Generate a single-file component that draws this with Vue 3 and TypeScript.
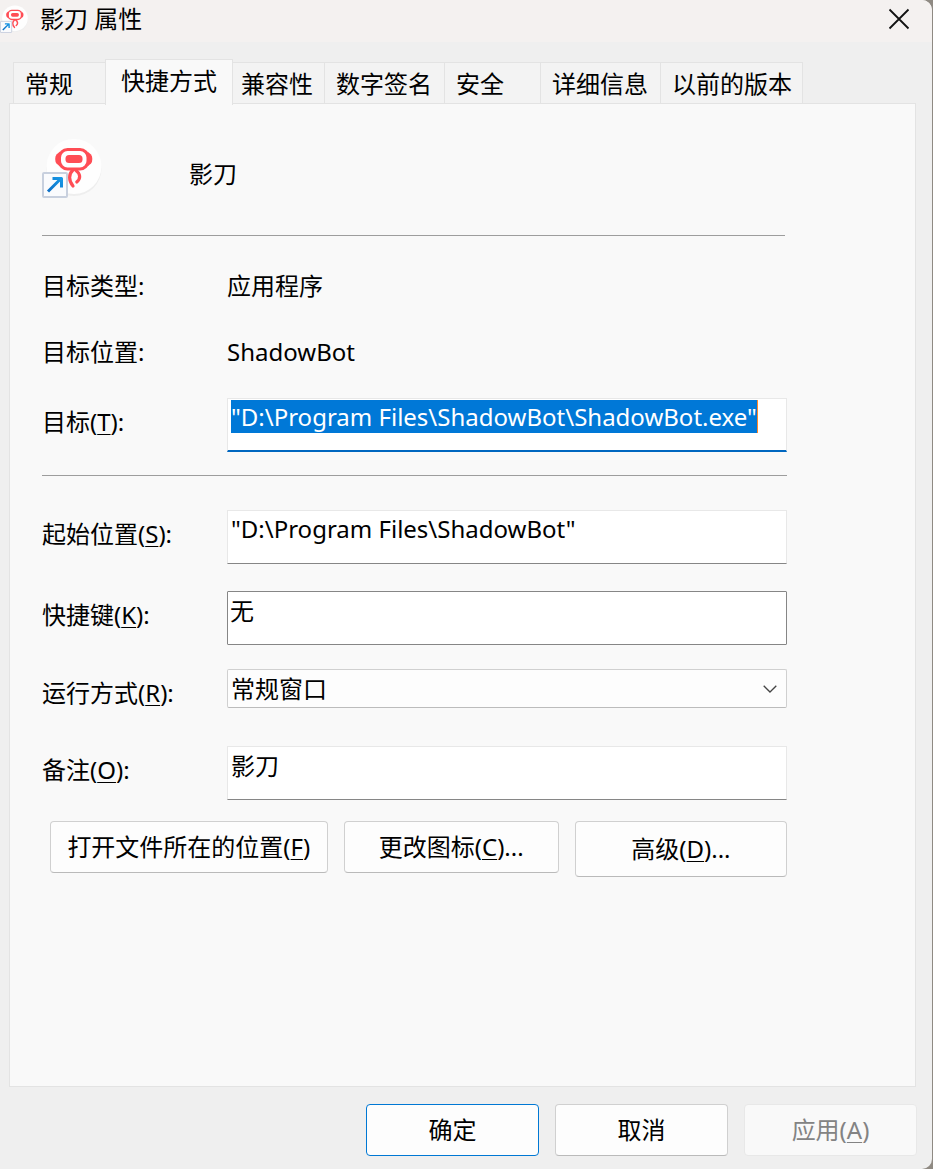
<script setup lang="ts">
import { onMounted, ref } from 'vue'

interface Tab {
  id: string
  label: string
  size: string
}

const tabs: Tab[] = [
  { id: 'general', label: '常规', size: 'w-93' },
  { id: 'shortcut', label: '快捷方式', size: 'w-128' },
  { id: 'compat', label: '兼容性', size: 'w-93' },
  { id: 'sign', label: '数字签名', size: 'w-121' },
  { id: 'security', label: '安全', size: 'w-97' },
  { id: 'details', label: '详细信息', size: 'w-121' },
  { id: 'previous', label: '以前的版本', size: 'w-143' },
]

const activeTab = ref('shortcut')
const target = ref('"D:\\Program Files\\ShadowBot\\ShadowBot.exe"')
const startIn = ref('"D:\\Program Files\\ShadowBot"')
const hotkey = ref('无')
const runMode = ref('常规窗口')
const comment = ref('影刀')
const targetInput = ref<HTMLInputElement | null>(null)

onMounted(() => {
  targetInput.value?.focus()
  targetInput.value?.select()
})
</script>

<template>
  <div class="window">
    <svg class="defs" aria-hidden="true">
      <defs>
        <linearGradient id="arrow-fill" x1="0" y1="1" x2="1" y2="0">
          <stop offset="0" stop-color="#0f6fc4" />
          <stop offset="1" stop-color="#1597e6" />
        </linearGradient>
        <symbol id="app-icon" viewBox="0 0 60 60">
          <circle cx="32" cy="30.500" r="27.500" fill="#eeeeee" />
          <circle cx="32" cy="28.500" r="27.500" fill="#fefefe" />
          <path d="M18 13.500 L14.500 16.500 Q13.200 18 13.200 21 Q13.200 24 14.500 25.500 L18 28.500 Z" fill="#ff4d55" />
          <path d="M45.500 13.500 L49 16.500 Q50.300 18 50.300 21 Q50.300 24 49 25.500 L45.500 28.500 Z" fill="#ff4d55" />
          <rect x="17.500" y="11.500" width="28.500" height="19.500" rx="8" fill="#fff" stroke="#ff4d55" stroke-width="3" />
          <rect x="23.500" y="17" width="17" height="8" rx="3.500" fill="#ff4d55" />
          <path d="M31 32 C26.500 36 26.500 42.500 31 48" fill="none" stroke="#ff4d55" stroke-width="3.200" stroke-linecap="round" />
          <path d="M33.500 32 C38.800 36 38.800 40.500 34.800 44" fill="none" stroke="#ff4d55" stroke-width="3.200" stroke-linecap="round" />
          <rect x="1" y="35" width="24" height="24" rx="1" fill="#fafbfd" stroke="#c8d0de" stroke-width="2" />
          <path d="M6 53.500 L19 40.500 M10.500 40.500 H19.500 V49.500" fill="none" stroke="url(#arrow-fill)" stroke-width="3" stroke-linejoin="round" />
        </symbol>
      </defs>
    </svg>

    <header class="titlebar">
      <svg class="title-icon" aria-hidden="true"><use href="#app-icon" /></svg>
      <h1 class="title">影刀 属性</h1>
      <button class="close" type="button" aria-label="关闭">
        <svg width="22" height="22" viewBox="0 0 22 22" aria-hidden="true">
          <path d="M1.500 1.500 L20.500 20.500 M20.500 1.500 L1.500 20.500" stroke="#111" stroke-width="1.800" fill="none" />
        </svg>
      </button>
    </header>

    <nav class="tabs" role="tablist">
      <button
        v-for="tab in tabs"
        :key="tab.id"
        type="button"
        role="tab"
        class="tab"
        :class="[tab.size, { active: tab.id === activeTab }]"
        :aria-selected="tab.id === activeTab"
        @click="activeTab = tab.id"
      >{{ tab.label }}</button>
    </nav>

    <main class="panel">
      <div class="head">
        <svg class="head-icon" aria-hidden="true"><use href="#app-icon" /></svg>
        <span>影刀</span>
      </div>

      <hr class="rule">

      <dl class="facts">
        <dt>目标类型:</dt>
        <dd>应用程序</dd>
        <dt>目标位置:</dt>
        <dd>ShadowBot</dd>
      </dl>

      <div class="row">
        <label for="target">目标(<u>T</u>):</label>
        <div class="field">
          <input id="target" ref="targetInput" v-model="target" class="box focused" type="text" spellcheck="false">
          <span class="caret" />
        </div>
      </div>

      <hr class="rule lower">

      <div class="rows">
        <div class="row">
          <label for="start">起始位置(<u>S</u>):</label>
          <input id="start" v-model="startIn" class="box" type="text" spellcheck="false">
        </div>
        <div class="row">
          <label for="hotkey">快捷键(<u>K</u>):</label>
          <input id="hotkey" v-model="hotkey" class="box outlined" type="text">
        </div>
        <div class="row run">
          <label for="run">运行方式(<u>R</u>):</label>
          <div class="field">
            <select id="run" v-model="runMode" class="select">
              <option>常规窗口</option>
              <option>最小化</option>
              <option>最大化</option>
            </select>
            <svg class="chevron" viewBox="0 0 14 8" aria-hidden="true">
              <path d="M0.700 0.700 L7 7 L13.300 0.700" fill="none" stroke="#444" stroke-width="1.300" />
            </svg>
          </div>
        </div>
        <div class="row">
          <label for="comment">备注(<u>O</u>):</label>
          <input id="comment" v-model="comment" class="box" type="text">
        </div>
      </div>

      <div class="actions">
        <button class="btn open" type="button">打开文件所在的位置(<u>F</u>)</button>
        <button class="btn change" type="button">更改图标(<u>C</u>)...</button>
        <button class="btn advanced" type="button">高级(<u>D</u>)...</button>
      </div>
    </main>

    <footer class="footer">
      <button class="btn primary" type="button">确定</button>
      <button class="btn" type="button">取消</button>
      <button class="btn" type="button" disabled>应用(<u>A</u>)</button>
    </footer>
  </div>
</template>

<style>
body {
  background: #8f8a83;
}
</style>

<style scoped>
.window {
  box-sizing: border-box;
  display: flex;
  flex-direction: column;
  min-height: 100vh;
  margin-right: 1px;
  overflow: hidden;
  border-radius: 0 10px 10px 0;
  background: #efefef;
  color: #000;
  font: 24px/32px "Noto Sans", "Noto Sans CJK SC", sans-serif;
}
.window *,
.window *::before {
  box-sizing: border-box;
}
button,
input,
select {
  margin: 0;
  border-radius: 0;
  color: inherit;
  font: inherit;
}
button {
  padding: 0;
}
u {
  text-decoration-thickness: 1px;
  text-underline-offset: 3px;
}
.defs {
  position: absolute;
  width: 0;
  height: 0;
}

.titlebar {
  display: flex;
  align-items: center;
  height: 42px;
  padding: 0 20px 5px 0;
  background: #f4f1f0;
}
.title-icon {
  flex: none;
  width: 28px;
  height: 28px;
}
.title {
  flex: 1;
  margin: 0 0 0 12px;
  font-size: 24px;
  font-weight: 400;
}
.close {
  display: grid;
  place-items: center;
  width: 26px;
  height: 26px;
  border: 0;
  background: none;
}

.tabs {
  display: flex;
  align-items: flex-end;
  margin: 17px 16px 0 13px;
}
.tab {
  height: 42px;
  margin-right: -1px;
  padding: 0 0 0 11px;
  border: 1px solid #e3e3e3;
  border-bottom: 0;
  background: #f3f3f3;
  text-align: left;
  white-space: nowrap;
}
.tab:nth-child(3) {
  padding-left: 8px;
}
.tab.active {
  z-index: 1;
  height: 46px;
  margin-bottom: -1px;
  padding: 0 0 4px 15px;
  background: #f9f9f9;
}
.w-93 { width: 93px; }
.w-97 { width: 97px; }
.w-121 { width: 121px; }
.w-128 { width: 128px; }
.w-143 { width: 143px; }

.panel {
  flex: 1;
  margin: -1px 16px 0 9px;
  padding: 34px 128px 0 32px;
  border: 1px solid #e3e3e3;
  background: #f9f9f9;
}
.head {
  display: flex;
  align-items: center;
  gap: 87px;
  height: 72px;
}
.head-icon {
  align-self: flex-start;
  width: 60px;
  height: 60px;
}
.rule {
  height: 1px;
  margin: 25px 2px 0 0;
  border: 0;
  background: #9d9d9d;
}
.rule.lower {
  margin: 23px 0 34px;
}
.facts {
  display: grid;
  grid-template-columns: 185px 1fr;
  row-gap: 34px;
  margin: 34px 0 30px;
}
.facts dd {
  margin: 0;
}
.rows {
  display: flex;
  flex-direction: column;
  gap: 27px;
}
.row {
  display: grid;
  grid-template-columns: 185px 1fr;
  align-items: center;
}
.row label {
  padding-bottom: 6px;
  white-space: nowrap;
}
.row.run {
  align-items: start;
  height: 50px;
  margin-top: -3px;
}
.run label {
  padding-top: 8px;
}
.field {
  position: relative;
  display: flex;
}
.box {
  width: 100%;
  height: 54px;
  padding: 2px 3px 19px;
  border: 1px solid #e8e8e8;
  border-bottom-color: #868686;
  outline: 0;
  background: #fff;
  line-height: 31px;
}
.box.focused {
  padding-bottom: 18px;
  border-bottom: 2px solid #0067c0;
}
.box.outlined {
  padding-left: 2px;
  border-color: #868686;
  border-radius: 1px;
}
.box::selection {
  background: #0078d7;
  color: #fff;
}
.caret {
  position: absolute;
  top: 2px;
  left: 530px;
  width: 1px;
  height: 33px;
  background: #ff8728;
}
.select {
  width: 100%;
  height: 39px;
  padding: 0 32px 0 3px;
  border: 1px solid #d0d0d0;
  border-bottom-color: #bcbcbc;
  border-radius: 2px;
  appearance: none;
  background: #fdfdfd;
}
.chevron {
  position: absolute;
  top: 16px;
  right: 10px;
  width: 14px;
  height: 8px;
  pointer-events: none;
}

.actions {
  display: flex;
  align-items: flex-start;
  gap: 16px;
  margin: 21px 0 0 8px;
}
.btn {
  height: 52px;
  border: 1px solid #d0d0d0;
  border-bottom-color: #bababa;
  border-radius: 4px;
  background: #fdfdfd;
  white-space: nowrap;
}
.actions .open {
  flex: 278 1 0;
}
.actions .change {
  flex: 215 1 0;
}
.actions .advanced {
  flex: 212 1 0;
  height: 56px;
}
.footer {
  display: flex;
  justify-content: flex-end;
  gap: 16px;
  padding: 17px 15px 13px;
}
.footer .btn {
  width: 173px;
}
.footer .primary {
  border-color: #0078d4;
}
.footer .btn:disabled {
  border-color: #e8e8e8;
  background: #f9f9f9;
  color: #838383;
}
</style>
